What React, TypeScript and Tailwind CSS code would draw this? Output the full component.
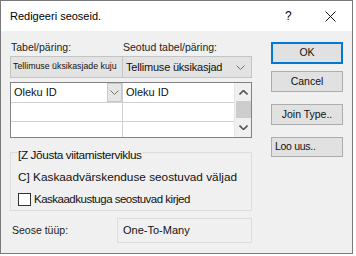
import React from "react";

const Chevron = ({ up = false, bold = false }: { up?: boolean; bold?: boolean }) => (
    <svg width="9" height="5" viewBox="0 0 9 5" className="block">
        <polyline
            points={up ? "0.5,4.5 4.5,0.5 8.5,4.5" : "0.5,0.5 4.5,4.5 8.5,0.5"}
            fill="none"
            stroke={bold ? "#555" : "#707070"}
            strokeWidth={bold ? 1.6 : 1}
        />
    </svg>
);

function Btn({ label, primary = false, left = false, h = "h-[21px]" }: { label: string; primary?: boolean; left?: boolean; h?: string }) {
    return (
        <div
            className={`w-[72px] ${h} flex items-center bg-[#e1e1e1] text-[10.5px] text-[#111] whitespace-nowrap ${
                primary ? "border-2 border-[#0078d7]" : "border border-[#adadad]"
            } ${left ? "justify-start pl-[3px] tracking-[-0.3px]" : "justify-center"}`}
        >
            {label}
        </div>
    );
}

export default function App() {
    return (
        <div className="w-[356px] h-[256px] bg-white font-['Liberation_Sans',Arial,sans-serif]">
            <div className="w-[353px] h-[254px] border border-[#7a7a7a] bg-[#f0f0f0] flex flex-col">
                {/* title bar */}
                <div className="h-[30px] bg-white flex items-center pl-[9px] text-[11px] text-black">
                    <span className="flex-1">Redigeeri seoseid.</span>
                    <span className="w-[12px] text-[12px] mr-[28px]">?</span>
                    <svg width="11" height="11" viewBox="0 0 11 11" className="mr-[16px]">
                        <path d="M0.5 0.5L10.5 10.5M10.5 0.5L0.5 10.5" stroke="#111" strokeWidth="1" />
                    </svg>
                </div>

                <div className="flex pl-[9px] pt-[10px]">
                    {/* left column */}
                    <div className="w-[242px] flex flex-col">
                        <div className="flex h-[14px] items-center text-[10.5px] text-[#222] whitespace-nowrap">
                            <span className="w-[113px] pl-[1px]">Tabel/päring:</span>
                            <span>Seotud tabel/päring:</span>
                        </div>

                        <div className="mt-[1px] h-[22px] flex border border-[#c4c4c4] bg-[#e3e3e3]">
                            <div className="w-[112px] border-r border-[#c4c4c4] flex items-center pl-[2px] text-[8.8px] text-[#111] whitespace-nowrap overflow-hidden">
                                Tellimuse üksikasjade kuju
                            </div>
                            <div className="flex-1 flex items-center pl-[3px] pr-[6px] text-[11px] tracking-[-0.2px] text-[#111] whitespace-nowrap">
                                <span className="flex-1">Tellimuse üksikasjad</span>
                                <Chevron />
                            </div>
                        </div>

                        <div className="mt-[4px] h-[56px] flex border border-[#828282] bg-white">
                            <div className="flex-1 flex flex-col">
                                <div className="h-[20px] flex border-b border-[#d0d0d0]">
                                    <div className="w-[112px] flex items-center border-r border-[#d0d0d0] text-[11px] text-[#111]">
                                        <span className="flex-1 pl-[3px] whitespace-nowrap">Oleku ID</span>
                                        <div className="w-[15px] h-[19px] bg-[#e6e6e6] border border-[#c8c8c8] flex items-center justify-center">
                                            <Chevron />
                                        </div>
                                    </div>
                                    <div className="flex-1 flex items-center pl-[3px] text-[11px] text-[#111] whitespace-nowrap">Oleku ID</div>
                                </div>
                                <div className="h-[19px] flex border-b border-[#d0d0d0]">
                                    <div className="w-[112px] border-r border-[#d0d0d0]" />
                                    <div className="flex-1" />
                                </div>
                                <div className="flex-1 flex">
                                    <div className="w-[112px] border-r border-[#d0d0d0]" />
                                    <div className="flex-1" />
                                </div>
                            </div>
                            <div className="w-[17px] bg-[#f0f0f0] flex flex-col items-center border-l border-[#e6e6e6]">
                                <div className="h-[18px] flex items-center">
                                    <Chevron up bold />
                                </div>
                                <div className="w-[15px] h-[17px] bg-[#cdcdcd]" />
                                <div className="flex-1 flex items-center">
                                    <Chevron bold />
                                </div>
                            </div>
                        </div>

                        <div className="mt-[14px] h-[59px] border border-[#dcdcdc] flex flex-col text-[11.8px] text-[#111] whitespace-nowrap">
                            <span className="-mt-[5px] ml-[7px] self-start bg-[#f0f0f0] leading-[14px] tracking-[-0.4px]">[Z Jõusta viitamisterviklus</span>
                            <span className="mt-[8px] ml-[7px] leading-[14px]">C] Kaskaadvärskenduse seostuvad väljad</span>
                            <div className="mt-[8px] ml-[7px] flex items-center">
                                <div className="w-[13px] h-[13px] bg-white border border-[#333]" />
                                <span className="ml-[3px] leading-[14px] text-[11.5px] tracking-[-0.5px]">Kaskaadkustuga seostuvad kirjed</span>
                            </div>
                        </div>

                        <div className="mt-[7px] h-[25px] flex items-center">
                            <span className="w-[107px] pl-[2px] text-[10.5px] text-[#222]">Seose tüüp:</span>
                            <div className="flex-1 h-full border border-[#dcdcdc] flex items-center pl-[5px] text-[11px] text-[#111]">
                                One-To-Many
                            </div>
                        </div>
                    </div>

                    {/* right column */}
                    <div className="ml-[19px] w-[72px] flex flex-col">
                        <div className="mt-[1px]">
                            <Btn label="OK" primary h="h-[22px]" />
                        </div>
                        <div className="mt-[7px]">
                            <Btn label="Cancel" />
                        </div>
                        <div className="mt-[12px]">
                            <Btn label="Join Type.." />
                        </div>
                        <div className="mt-[12px]">
                            <Btn label="Loo uus.." left h="h-[20px]" />
                        </div>
                    </div>
                </div>
            </div>
        </div>
    );
}
